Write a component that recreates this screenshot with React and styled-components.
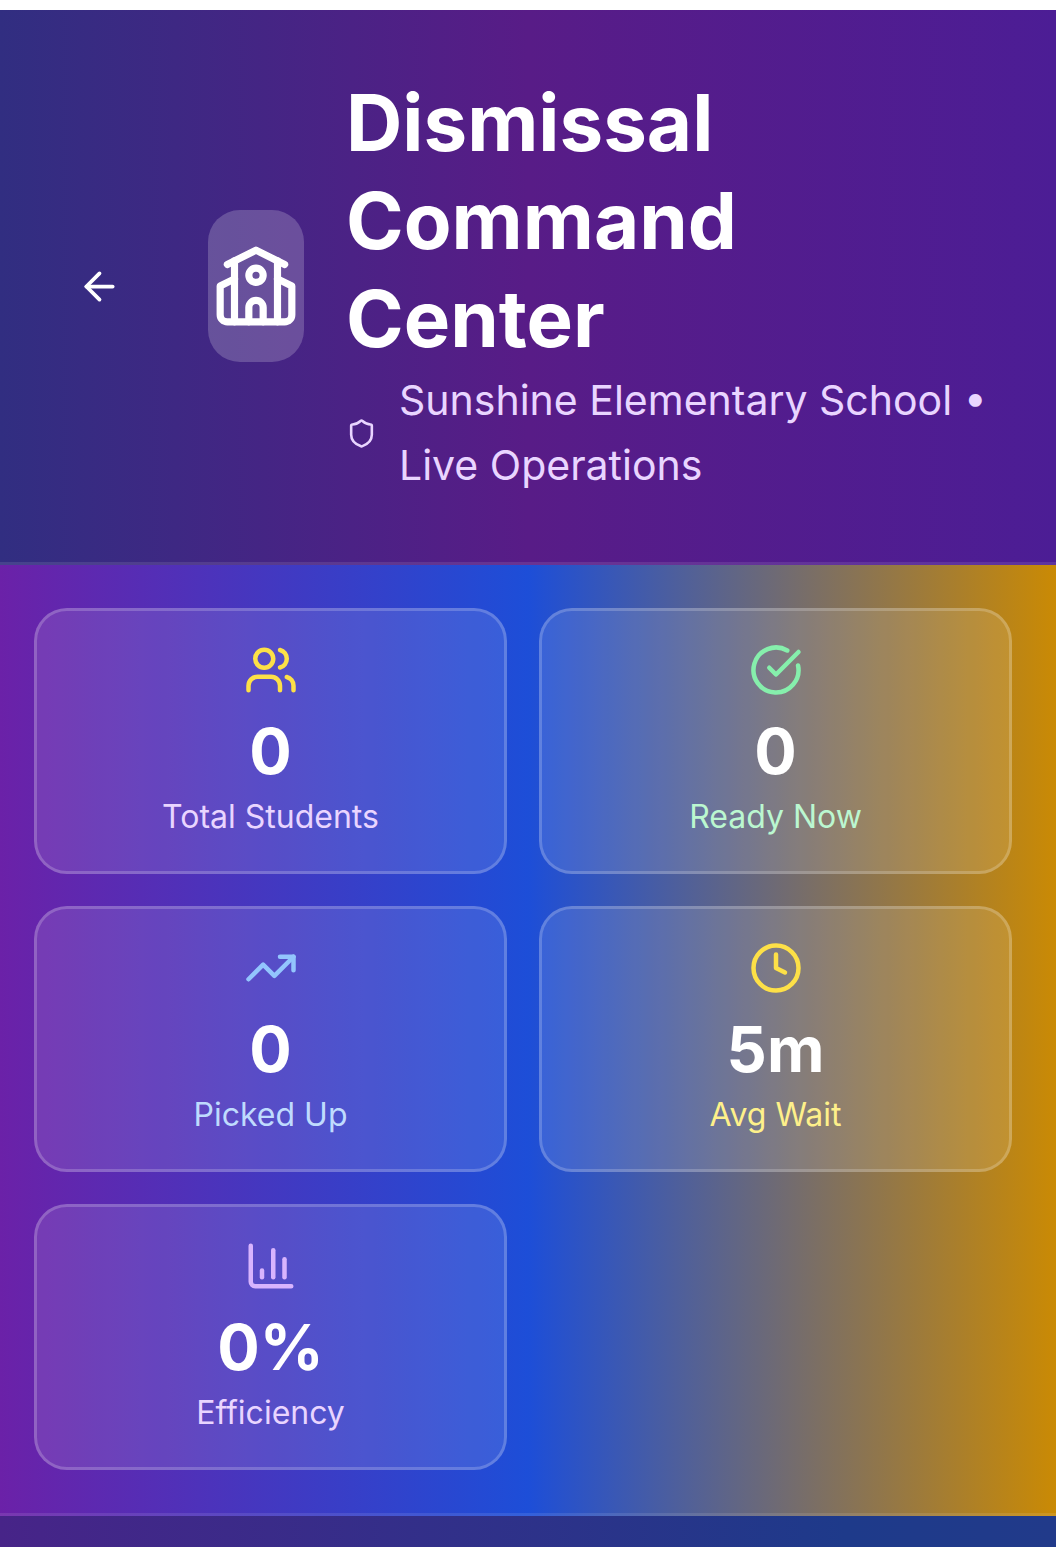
import React from 'react';
import styled, { createGlobalStyle } from 'styled-components';

const GlobalStyle = createGlobalStyle`
  *, *::before, *::after { box-sizing: border-box; }
  body {
    margin: 0;
    background: #ffffff;
    font-family: Inter, "Liberation Sans", sans-serif;
    overflow-x: hidden;
    scrollbar-width: none;
  }
  h1, p { margin: 0; }
`;

const Page = styled.div`
  padding: 10px 3px 0 0;
`;

const Header = styled.header`
  display: flex;
  align-items: center;
  padding: 64px 64px 64px 54px;
  background: linear-gradient(to right, #312e81, #581c87, #4c1d95);
  background-origin: border-box;
  border-bottom: 3px solid rgba(255, 255, 255, 0.1);
`;

const BackButton = styled.button`
  display: flex;
  flex: none;
  padding: 23px;
  margin-right: 63px;
  border: 0;
  background: none;
  color: #ffffff;
  cursor: pointer;
`;

const LogoBadge = styled.div`
  display: flex;
  flex: none;
  align-items: center;
  justify-content: center;
  width: 96px;
  height: 152px;
  margin-right: 42px;
  border-radius: 32px;
  background: rgba(255, 255, 255, 0.2);
  color: #ffffff;
`;

const Heading = styled.div`
  flex: 1;
  min-width: 0;
`;

const Title = styled.h1`
  max-width: 480px;
  color: #ffffff;
  font-size: 78px;
  font-weight: 700;
  line-height: 98px;
`;

const Subtitle = styled.div`
  display: flex;
  align-items: center;
  gap: 22px;
  color: #e9d5ff;
  font-size: 41px;
  line-height: 65px;
`;

const Stats = styled.main`
  display: grid;
  grid-template-columns: 1fr 1fr;
  gap: 32px;
  padding: 43px 44px 43px 34px;
  background: linear-gradient(to right, #6b21a8, #1d4ed8, #ca8a04);
  background-origin: border-box;
  border-bottom: 3px solid rgba(255, 255, 255, 0.1);
`;

const Card = styled.section`
  display: flex;
  flex-direction: column;
  align-items: center;
  padding: 32px;
  border: 3px solid rgba(255, 255, 255, 0.2);
  border-radius: 33px;
  background: rgba(255, 255, 255, 0.11);
  color: ${(p) => p.$accent};
`;

const Value = styled.p`
  margin-top: 11px;
  color: #ffffff;
  font-size: 63px;
  font-weight: 700;
  line-height: 86px;
`;

const Label = styled.p`
  color: ${(p) => p.$color};
  font-size: 32px;
  line-height: 45px;
`;

const Footer = styled.footer`
  height: 31px;
  background: linear-gradient(to right, #472488, #1e3a8a 80%, #213a8a);
`;

const Svg = styled.svg`
  display: block;
  flex: none;
  fill: none;
  stroke: currentColor;
  stroke-width: 2;
  stroke-linecap: round;
  stroke-linejoin: round;
`;

function Icon({ size, children }) {
  return (
    <Svg width={size} height={size} viewBox="0 0 24 24" aria-hidden="true">
      {children}
    </Svg>
  );
}

const icons = {
  users: (
    <>
      <path d="M16 21v-2a4 4 0 0 0-4-4H6a4 4 0 0 0-4 4v2" />
      <circle cx="9" cy="7" r="4" />
      <path d="M22 21v-2a4 4 0 0 0-3-3.87" />
      <path d="M16 3.13a4 4 0 0 1 0 7.75" />
    </>
  ),
  check: (
    <>
      <path d="M21.801 10A10 10 0 1 1 17 3.335" />
      <path d="m9 11 3 3L22 4" />
    </>
  ),
  trend: (
    <>
      <path d="M22 7 13.5 15.5 8.5 10.5 2 17" />
      <path d="M16 7h6v6" />
    </>
  ),
  clock: (
    <>
      <circle cx="12" cy="12" r="10" />
      <path d="M12 6v6l4 2" />
    </>
  ),
  chart: (
    <>
      <path d="M3 3v16a2 2 0 0 0 2 2h16" />
      <path d="M18 17V9" />
      <path d="M13 17V5" />
      <path d="M8 17v-3" />
    </>
  ),
};

const stats = [
  { icon: 'users', value: '0', label: 'Total Students', accent: '#fde047', color: '#e9d5ff' },
  { icon: 'check', value: '0', label: 'Ready Now', accent: '#86efac', color: '#bbf7d0' },
  { icon: 'trend', value: '0', label: 'Picked Up', accent: '#93c5fd', color: '#bfdbfe' },
  { icon: 'clock', value: '5m', label: 'Avg Wait', accent: '#fde047', color: '#fef08a' },
  { icon: 'chart', value: '0%', label: 'Efficiency', accent: '#d8b4fe', color: '#e9d5ff' },
];

export default function App() {
  return (
    <Page>
      <GlobalStyle />
      <Header>
        <BackButton type="button" aria-label="Back">
          <Icon size={45}>
            <path d="m12 19-7-7 7-7" />
            <path d="M19 12H5" />
          </Icon>
        </BackButton>
        <LogoBadge>
          <Icon size={86}>
            <path d="M14 22v-4a2 2 0 1 0-4 0v4" />
            <path d="m18 10 4 2v8a2 2 0 0 1-2 2H4a2 2 0 0 1-2-2v-8l4-2" />
            <path d="M18 5v17" />
            <path d="m4 6 8-4 8 4" />
            <path d="M6 5v17" />
            <circle cx="12" cy="9" r="2" />
          </Icon>
        </LogoBadge>
        <Heading>
          <Title>Dismissal Command Center</Title>
          <Subtitle>
            <Icon size={31}>
              <path d="M20 13c0 5-3.5 7.5-7.66 8.95a1 1 0 0 1-.67-.01C7.5 20.5 4 18 4 13V6a1 1 0 0 1 1-1c2 0 4.5-1.2 6.24-2.72a1.17 1.17 0 0 1 1.52 0C14.51 3.81 17 5 19 5a1 1 0 0 1 1 1z" />
            </Icon>
            <p>Sunshine Elementary School • Live Operations</p>
          </Subtitle>
        </Heading>
      </Header>
      <Stats>
        {stats.map((s) => (
          <Card key={s.label} $accent={s.accent}>
            <Icon size={54}>{icons[s.icon]}</Icon>
            <Value>{s.value}</Value>
            <Label $color={s.color}>{s.label}</Label>
          </Card>
        ))}
      </Stats>
      <Footer />
    </Page>
  );
}
